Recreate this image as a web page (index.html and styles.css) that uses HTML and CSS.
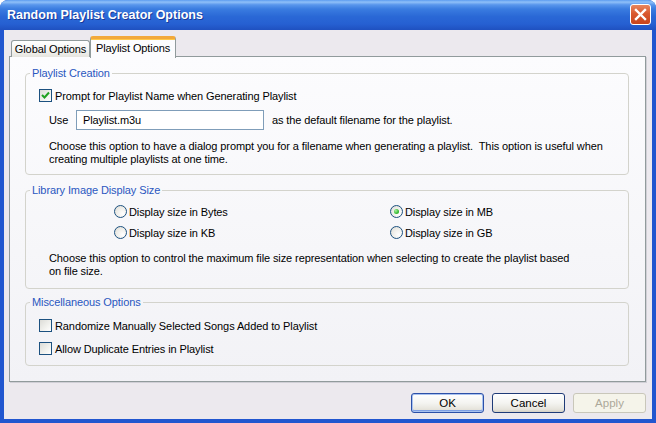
FILE: index.html
```html
<!DOCTYPE html>
<html lang="en">
<head>
    <meta charset="UTF-8">
    <title>Random Playlist Creator Options</title>
    <link rel="stylesheet" href="styles.css">
</head>
<body>
    <div class="window">
        <div class="titlebar">
            <span class="title">Random Playlist Creator Options</span>
            <button class="close" aria-label="Close">
                <svg width="13" height="13" viewBox="0 0 13 13">
                    <path d="M2 2 L11 11 M11 2 L2 11" stroke="#fff" stroke-width="2.4" stroke-linecap="square"/>
                </svg>
            </button>
        </div>

        <div class="client">
            <div class="tabs">
                <div class="tab">Global Options</div>
                <div class="tab active">Playlist Options</div>
            </div>

            <div class="panel">
                <fieldset class="group group-playlist">
                    <legend>Playlist Creation</legend>
                    <div class="row check-row">
                        <span class="checkbox checked">
                            <svg width="11" height="11" viewBox="0 0 11 11">
                                <path d="M2 5 L4.5 7.5 L9 2.5" fill="none" stroke="#21a121" stroke-width="2"/>
                            </svg>
                        </span>
                        <span>Prompt for Playlist Name when Generating Playlist</span>
                    </div>
                    <div class="row use-row">
                        <span class="use-label">Use</span>
                        <div class="textbox">Playlist.m3u</div>
                        <span>as the default filename for the playlist.</span>
                    </div>
                    <p class="note">Choose this option to have a dialog prompt you for a filename when generating a playlist.&nbsp; This option is useful when<br>creating multiple playlists at one time.</p>
                </fieldset>

                <fieldset class="group group-size">
                    <legend>Library Image Display Size</legend>
                    <div class="radios">
                        <div class="row"><span class="radio"></span>Display size in Bytes</div>
                        <div class="row"><span class="radio selected"></span>Display size in MB</div>
                        <div class="row"><span class="radio"></span>Display size in KB</div>
                        <div class="row"><span class="radio"></span>Display size in GB</div>
                    </div>
                    <p class="note">Choose this option to control the maximum file size representation when selecting to create the playlist based<br>on file size.</p>
                </fieldset>

                <fieldset class="group group-misc">
                    <legend>Miscellaneous Options</legend>
                    <div class="row check-row"><span class="checkbox"></span><span>Randomize Manually Selected Songs Added to Playlist</span></div>
                    <div class="row check-row"><span class="checkbox"></span><span>Allow Duplicate Entries in Playlist</span></div>
                </fieldset>
            </div>

            <div class="buttons">
                <button class="btn default">OK</button>
                <button class="btn">Cancel</button>
                <button class="btn" disabled>Apply</button>
            </div>
        </div>
    </div>
</body>
</html>
```

FILE: styles.css
```css
body {
    margin: 0;
    background: #fff;
    font-family: 'Liberation Sans', Arial, sans-serif;
    font-size: 11px;
    letter-spacing: -0.1px;
    color: #000;
}

.window {
    width: 656px;
    height: 423px;
    display: flex;
    flex-direction: column;
    border-radius: 8px 8px 0 0;
    overflow: hidden;
    background: #2156cf;
}

/* title bar */
.titlebar {
    height: 30px;
    flex: none;
    display: flex;
    align-items: center;
    justify-content: space-between;
    padding: 0 5px 0 7px;
    background: linear-gradient(to bottom, #5c9cf0 0%, #8fc0f8 7%, #5896ec 16%, #3a7ce0 30%, #2a68d6 55%, #2660d2 80%, #1f51c0 100%);
}

.title {
    color: #fff;
    font-weight: bold;
    font-size: 12.5px;
    letter-spacing: 0;
    text-shadow: 1px 1px 0 #1a3a9a;
}

.close {
    width: 21px;
    height: 21px;
    margin-top: -2px;
    padding: 0;
    border: 1px solid #fff;
    border-radius: 3px;
    background: linear-gradient(to bottom, #e8865f 0%, #d9592f 45%, #c8441c 100%);
    display: flex;
    align-items: center;
    justify-content: center;
}

/* client area */
.client {
    flex: 1;
    display: flex;
    flex-direction: column;
    margin: 0 4px 4px 4px;
    padding: 6px 6px 0 5px;
    background: #ece9ee;
}

.tabs {
    display: flex;
    align-items: flex-end;
    height: 21px;
    padding-left: 2px;
    position: relative;
    z-index: 1;
}

.tab {
    width: 79px;
    height: 17px;
    box-sizing: border-box;
    display: flex;
    align-items: center;
    justify-content: center;
    border: 1px solid #919b9c;
    border-bottom: none;
    border-radius: 3px 3px 0 0;
    background: linear-gradient(to bottom, #fff 0%, #f3f3f0 60%, #e6e5df 100%);
}

.tab.active {
    width: 86px;
    height: 22px;
    margin-bottom: -1px;
    padding-bottom: 1px;
    border-top: 3px solid #f2a93b;
    background: #fcfcfe;
    box-shadow: inset 0 1px 0 #ffc84a;
}

.panel {
    height: 314px;
    margin-top: -1px;
    padding: 10px 16px 0 15px;
    border: 1px solid #919b9c;
    background: linear-gradient(to bottom, #fcfcfe 0%, #f6f6f9 60%, #f2f2f6 100%);
    box-shadow: 1px 1px 0 #d0cfd6;
}

/* group boxes */
.group {
    margin: 0;
    padding: 0 0 8px 13px;
    border: 1px solid #d3d3cc;
    border-radius: 4px;
}

.group legend {
    margin-left: -9px;
    padding: 0 2px;
    line-height: 13px;
    color: #2a57c0;
}

.group-size {
    margin-top: 9px;
    padding-bottom: 10px;
}

.group-misc {
    margin-top: 7px;
    padding-bottom: 10px;
}

.row {
    display: flex;
    align-items: center;
    height: 13px;
    white-space: nowrap;
}

.check-row {
    margin-top: 9px;
    gap: 3px;
}

.group-misc .check-row {
    margin-top: 10px;
}

.checkbox {
    width: 11px;
    height: 11px;
    flex: none;
    border: 1px solid #1c5180;
    background: linear-gradient(135deg, #dcdcd7 0%, #f2f2ee 60%, #fff 100%);
    display: flex;
    align-items: center;
    justify-content: center;
}

.use-row {
    height: 20px;
    margin-top: 8px;
    padding-left: 10px;
}

.use-label {
    width: 27px;
}

.textbox {
    width: 180px;
    height: 18px;
    margin-right: 8px;
    padding-left: 6px;
    border: 1px solid #7f9db9;
    background: #fff;
    line-height: 18px;
}

.note {
    margin: 10px 0 0 10px;
    line-height: 13px;
    white-space: nowrap;
}

.group-size .note {
    margin-top: 13px;
}

.radios {
    display: grid;
    grid-template-columns: 276px 1fr;
    row-gap: 8px;
    margin-top: 8px;
    padding-left: 75px;
}

.radios .row {
    gap: 2px;
}

.radio {
    width: 11px;
    height: 11px;
    flex: none;
    border: 1px solid #1c5180;
    border-radius: 50%;
    background: radial-gradient(circle at 70% 70%, #fff 0%, #ecebe6 60%, #d6d5cf 100%);
    position: relative;
}

.radio.selected::after {
    content: '';
    position: absolute;
    left: 3px;
    top: 3px;
    width: 5px;
    height: 5px;
    border-radius: 50%;
    background: radial-gradient(circle at 35% 35%, #a8f0a0 0%, #3fbf3a 55%, #1f9a1c 100%);
}

/* dialog buttons */
.buttons {
    display: flex;
    justify-content: flex-end;
    gap: 8px;
    margin-top: 11px;
    padding-right: 0;
}

.btn {
    width: 73px;
    height: 20px;
    padding: 0;
    font-family: 'Liberation Sans', Arial, sans-serif;
    font-size: 11.5px;
    color: #000;
    border: 1px solid #1f3b78;
    border-radius: 3px;
    background: linear-gradient(to bottom, #fff 0%, #f4f4f1 50%, #e6e4dc 85%, #d4d0c6 100%);
}

.btn.default {
    border-color: #2c50a8;
    box-shadow: inset 0 0 0 1px #a9c2ef, inset 0 -1px 0 1px #7fa0e4;
}

.btn:disabled {
    color: #aca899;
    border-color: #c9c7ba;
    background: #f5f4ea;
}
```
